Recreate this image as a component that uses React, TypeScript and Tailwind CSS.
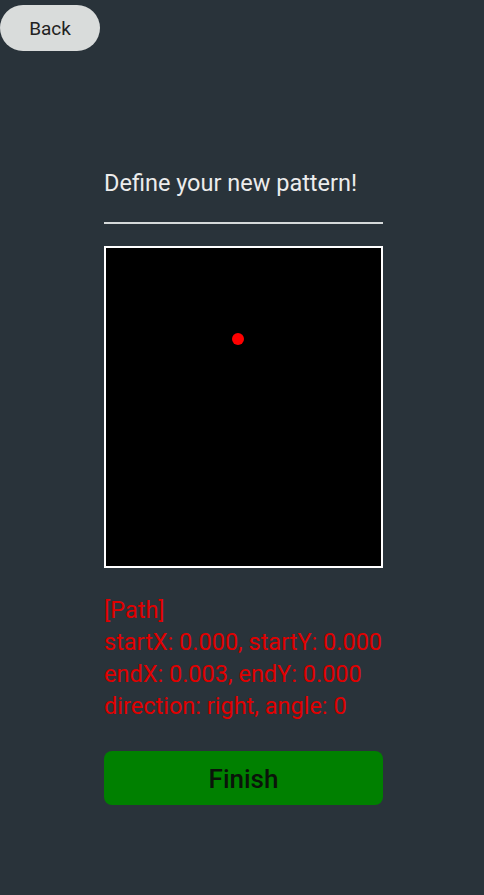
import React from "react";

function PatternCanvas() {
  return (
    <div className="relative mt-[22px] h-[322px] w-[279px] border-2 border-white bg-black">
      <div className="absolute left-[126px] top-[85px] h-[12px] w-[12px] rounded-full bg-[#ff0000]"></div>
    </div>
  );
}

export default function App() {
  const lines = [
    "[Path]",
    "startX: 0.000, startY: 0.000",
    "endX: 0.003, endY: 0.000",
    "direction: right, angle: 0",
  ];
  return (
    <div className="min-h-[895px] w-full bg-[#29333a] font-['Roboto',sans-serif]">
      <div className="pt-[5px]">
        <button className="h-[46px] w-[100px] rounded-full bg-[#d9dcdb] pt-[3px] text-[19px] text-[#222]">
          Back
        </button>
      </div>
      <div className="ml-[104px] mt-[118px] flex w-[279px] flex-col">
        <div className="whitespace-nowrap text-[23.5px] leading-[28px] text-[#ececec]">
          Define your new pattern!
        </div>
        <div className="mt-[25px] h-[2px] w-full bg-[#d5d9d9]"></div>
        <PatternCanvas />
        <div className="mt-[26px] whitespace-nowrap text-[23.5px] leading-[32px] text-[#e00000]">
          {lines.map((l) => (
            <div key={l}>{l}</div>
          ))}
        </div>
        <button className="mt-[29px] h-[54px] w-full rounded-[8px] bg-[#008000] pt-[2px] text-[26px] font-medium text-[#0a140a]">
          Finish
        </button>
      </div>
    </div>
  );
}
